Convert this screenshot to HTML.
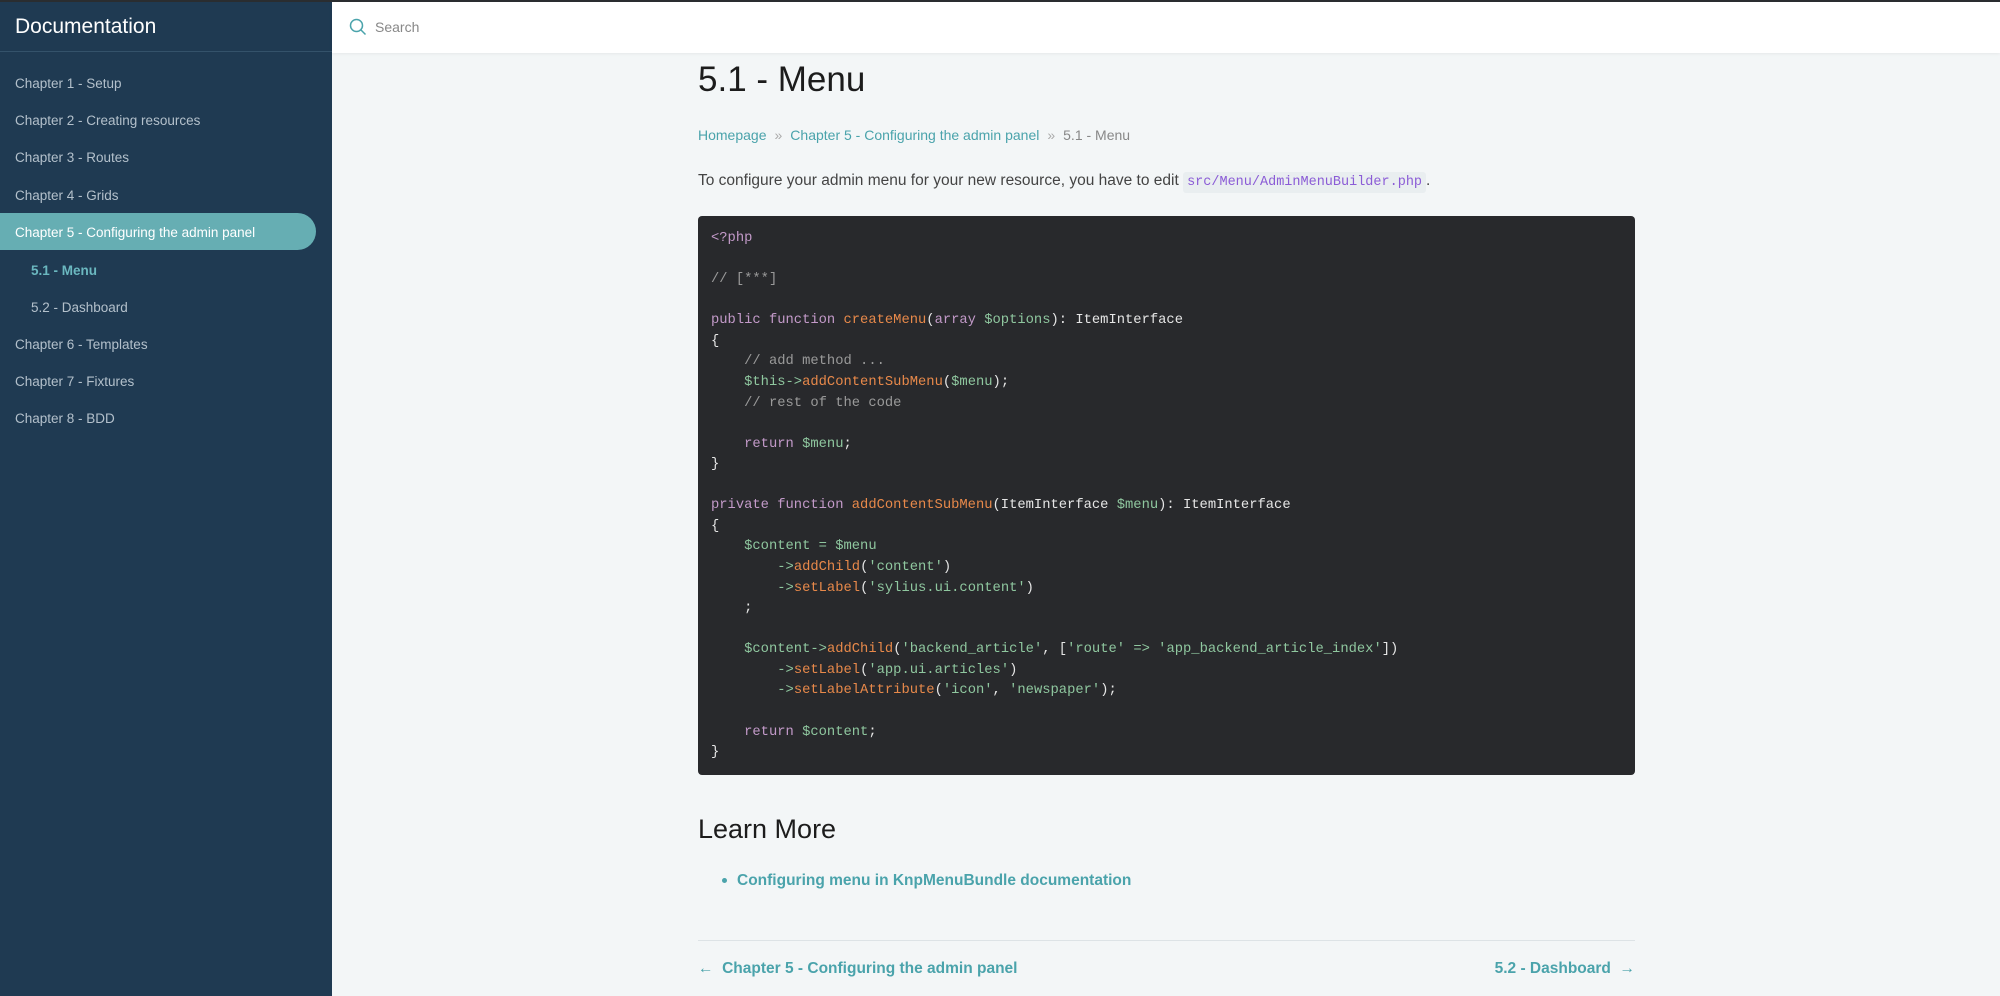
<!DOCTYPE html>
<html><head><meta charset="utf-8"><style>
*{margin:0;padding:0;box-sizing:border-box}
body{width:2000px;height:996px;overflow:hidden;background:#f3f6f7;font-family:"Liberation Sans",sans-serif;position:relative}
.top{position:absolute;left:0;top:0;width:2000px;height:2px;background:#2a2d30;z-index:5}
.side{position:absolute;left:0;top:0;width:332px;height:996px;background:#1f3a52}
.side h1{position:absolute;left:15px;top:15px;font-size:21px;font-weight:normal;color:#fff}
.side .div{position:absolute;left:0;top:51px;width:332px;height:1px;background:#34526a}
.side a{position:absolute;left:15px;font-size:13.5px;color:#b3c0cb;text-decoration:none;line-height:20px;margin-top:2px}
.side a.sub{left:31px}
.side a.cur{color:#6bb8c0;font-weight:bold}
.pill{position:absolute;left:0;top:213px;width:316px;height:37px;background:#66aeb3;border-radius:0 19px 19px 0}
.side a.act{color:#fff}
.hdr{position:absolute;left:332px;top:0;width:1668px;height:53px;background:#fff;box-shadow:0 1px 3px rgba(0,0,0,.06)}
.hdr span{position:absolute;left:43px;top:19px;font-size:14px;color:#888}
.c{position:absolute;left:698px;width:937px}
h2.t{top:60px;font-size:35px;font-weight:normal;color:#1c1c1c}
.bc{top:127px;font-size:14px;color:#888}
.bc a{color:#4aa3ab;text-decoration:none}
.bc i{font-style:normal;margin:0 8px;color:#aaa}
.p{top:172px;font-size:15.5px;color:#444}
.p code{font-family:"Liberation Mono",monospace;font-size:13.5px;color:#8b5cd6;background:#e9eef0;padding:3px 4px;border-radius:3px}
pre{position:absolute;left:698px;top:216px;width:937px;height:559px;background:#28292c;border-radius:4px;padding:13px 13px;font-family:"Liberation Mono",monospace;font-size:13.8px;line-height:20.56px;color:#e6e6e6}
.k{color:#c39ac9}.f{color:#e8894a}.v{color:#8fc79f}.s{color:#8fc79f}.m{color:#9a9a9a}
h3.l{top:814px;font-size:27px;font-weight:normal;color:#1c1c1c}
.li{top:872px;left:722px;font-size:15.5px;font-weight:bold;color:#4aa3ab}
.li b{display:inline-block;width:5px;height:5px;border-radius:50%;background:#4aa3ab;margin-right:10px;vertical-align:middle}
.hr{top:940px;height:1px;background:#dde3e6}
.nav{top:960px;font-size:15.5px;font-weight:bold;color:#4aa3ab}
</style></head><body>
<div class="top"></div>
<div class="side">
<h1>Documentation</h1><div class="div"></div>
<div class="pill"></div>
<a style="top:72px">Chapter 1 - Setup</a>
<a style="top:109px">Chapter 2 - Creating resources</a>
<a style="top:146px">Chapter 3 - Routes</a>
<a style="top:184px">Chapter 4 - Grids</a>
<a class="act" style="top:221px">Chapter 5 - Configuring the admin panel</a>
<a class="sub cur" style="top:259px">5.1 - Menu</a>
<a class="sub" style="top:296px">5.2 - Dashboard</a>
<a style="top:333px">Chapter 6 - Templates</a>
<a style="top:370px">Chapter 7 - Fixtures</a>
<a style="top:407px">Chapter 8 - BDD</a>
</div>
<div class="hdr"><svg style="position:absolute;left:17px;top:18px" width="18" height="18" viewBox="0 0 18 18"><circle cx="7.5" cy="7.5" r="6" fill="none" stroke="#4aa3ab" stroke-width="1.5"/><path d="M12 12l4.5 4.5" stroke="#4aa3ab" stroke-width="1.5"/></svg><span>Search</span></div>
<h2 class="c t">5.1 - Menu</h2>
<div class="c bc"><a>Homepage</a><i>»</i><a>Chapter 5 - Configuring the admin panel</a><i>»</i>5.1 - Menu</div>
<div class="c p">To configure your admin menu for your new resource, you have to edit <code>src/Menu/AdminMenuBuilder.php</code>.</div>
<pre><span class="k">&lt;?php</span>

<span class="m">// [***]</span>

<span class="k">public function</span> <span class="f">createMenu</span>(<span class="k">array</span> <span class="v">$options</span>): ItemInterface
{
    <span class="m">// add method ...</span>
    <span class="v">$this</span><span class="v">-&gt;</span><span class="f">addContentSubMenu</span>(<span class="v">$menu</span>);
    <span class="m">// rest of the code</span>

    <span class="k">return</span> <span class="v">$menu</span>;
}

<span class="k">private function</span> <span class="f">addContentSubMenu</span>(ItemInterface <span class="v">$menu</span>): ItemInterface
{
    <span class="v">$content</span> <span class="v">=</span> <span class="v">$menu</span>
        <span class="v">-&gt;</span><span class="f">addChild</span>(<span class="s">'content'</span>)
        <span class="v">-&gt;</span><span class="f">setLabel</span>(<span class="s">'sylius.ui.content'</span>)
    ;

    <span class="v">$content</span><span class="v">-&gt;</span><span class="f">addChild</span>(<span class="s">'backend_article'</span>, [<span class="s">'route'</span> <span class="v">=&gt;</span> <span class="s">'app_backend_article_index'</span>])
        <span class="v">-&gt;</span><span class="f">setLabel</span>(<span class="s">'app.ui.articles'</span>)
        <span class="v">-&gt;</span><span class="f">setLabelAttribute</span>(<span class="s">'icon'</span>, <span class="s">'newspaper'</span>);

    <span class="k">return</span> <span class="v">$content</span>;
}</pre>
<h3 class="c l">Learn More</h3>
<div class="c li"><b></b>Configuring menu in KnpMenuBundle documentation</div>
<div class="c hr"></div>
<div class="c nav"><span>← &nbsp;Chapter 5 - Configuring the admin panel</span><span style="float:right">5.2 - Dashboard &nbsp;→</span></div>
</body></html>
